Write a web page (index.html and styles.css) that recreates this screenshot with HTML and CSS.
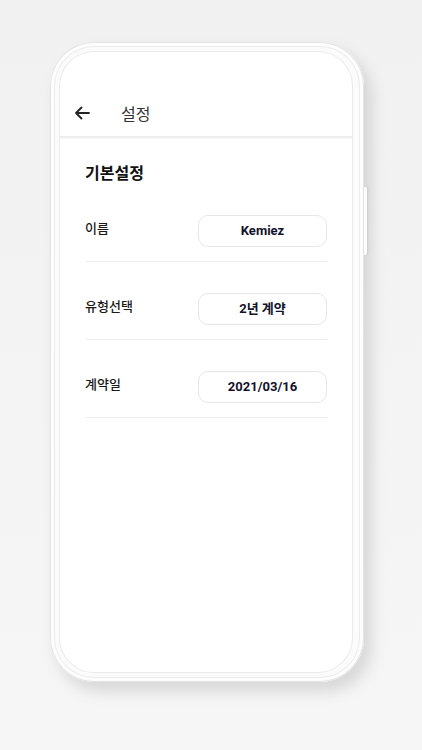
FILE: index.html
```html
<!DOCTYPE html>
<html lang="ko">

<head>
    <meta charset="utf-8">
    <title>설정</title>
    <link rel="stylesheet" href="styles.css">
</head>

<body>
    <div class="phone">
        <span class="side-btn"></span>
        <div class="screen">
            <div class="app-bar">
                <svg class="back" width="16" height="14" viewBox="0 0 16 14">
                    <path d="M15 7H2M7.5 1.5L2 7l5.5 5.5" fill="none" stroke="#222" stroke-width="1.8" stroke-linecap="round" stroke-linejoin="round"/>
                </svg>
                <span class="app-title">설정</span>
            </div>

            <div class="content">
                <div class="section-title">기본설정</div>

                <div class="row">
                    <span class="row-label">이름</span>
                    <div class="value-box">Kemiez</div>
                </div>

                <div class="row">
                    <span class="row-label">유형선택</span>
                    <div class="value-box">2년 계약</div>
                </div>

                <div class="row">
                    <span class="row-label">계약일</span>
                    <div class="value-box">2021/03/16</div>
                </div>
            </div>
        </div>
    </div>
</body>

</html>
```

FILE: styles.css
```css
body {
    margin: 0;
    padding: 42px 0 0 50px;
    height: 708px;
    font-family: Roboto, "Noto Sans CJK KR", sans-serif;
    background: linear-gradient(180deg, #f1f1f1 0%, #f6f6f6 100%);
}

.phone {
    position: relative;
    box-sizing: border-box;
    width: 314px;
    height: 640px;
    padding: 10px 12px 10px 10px;
    border-radius: 44px;
    background: #fbfbfb;
    box-shadow: 7px 9px 16px rgba(0, 0, 0, 0.13), inset 0 0 0 1px #e4e4e4, inset 0 0 0 4px #fdfdfd, inset 0 0 0 5px #ececec;
}

.side-btn {
    position: absolute;
    top: 145px;
    right: -3px;
    width: 3px;
    height: 68px;
    border-radius: 0 2px 2px 0;
    background: #fcfcfc;
    box-shadow: 1px 0 2px rgba(0, 0, 0, 0.08);
}

.screen {
    height: 100%;
    border-radius: 34px;
    background: white;
    overflow: hidden;
    box-shadow: 0 0 0 1px #ebebeb;
}

.app-bar {
    display: flex;
    align-items: center;
    gap: 31px;
    height: 36px;
    padding: 43px 0 5px 14px;
    border-bottom: 2px solid #eeeeee;
    box-shadow: 0 1px 2px rgba(0, 0, 0, 0.04);
}

.back {
    display: block;
}

.app-title {
    font-size: 16px;
    color: #333;
}

.content {
    padding: 26px 25px 0;
}

.section-title {
    font-size: 16px;
    font-weight: 700;
    line-height: 20px;
    color: #111;
}

.row {
    display: flex;
    align-items: center;
    justify-content: space-between;
    padding: 31px 0 14px;
    border-bottom: 1px solid #eeeeee;
}

.row-label {
    margin-bottom: 8px;
    font-size: 13px;
    font-weight: 500;
    color: #1a1a1a;
}

.value-box {
    box-sizing: border-box;
    width: 129px;
    height: 32px;
    line-height: 30px;
    text-align: center;
    border: 1px solid #e6e6e6;
    border-radius: 10px;
    font-size: 13px;
    font-weight: 700;
    color: #12122a;
}
```
